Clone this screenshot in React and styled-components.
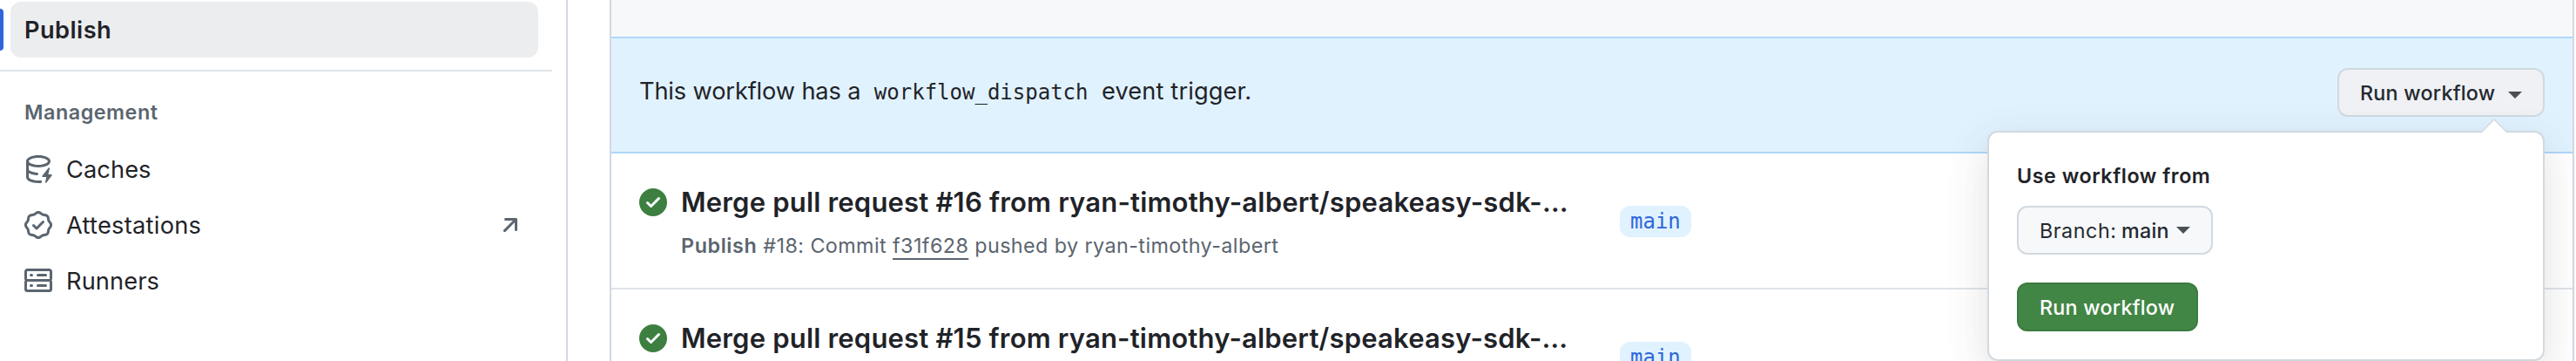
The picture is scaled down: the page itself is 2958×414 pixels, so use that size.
import React from "react";
import styled, { createGlobalStyle } from "styled-components";

const GlobalStyle = createGlobalStyle`
  *, *::before, *::after { box-sizing: border-box; }
  body {
    margin: 0;
    background: #fff;
    color: #1f2328;
    font-family: Inter, "Liberation Sans", sans-serif;
  }
`;

const Page = styled.div`
  display: flex;
  width: 2958px;
  height: 414px;
  overflow: hidden;
  background: #fff;
`;

/* Sidebar */

const Sidebar = styled.nav`
  flex: none;
  width: 652px;
  border-right: 2px solid #d1d9e0;
  padding-top: 2px;
`;

const NavList = styled.ul`
  list-style: none;
  margin: 0;
  padding: 0 32px 0 12px;
`;

const NavItem = styled.li`
  position: relative;
  display: flex;
  align-items: center;
  gap: 16px;
  height: 64px;
  padding: 0 16px;
  border-radius: 12px;
  font-size: 27.2px;
  font-weight: ${(p) => (p.$active ? 600 : 400)};
  letter-spacing: ${(p) => p.$tracking || 0}px;
  background: ${(p) => (p.$active ? "#ecedef" : "transparent")};
`;

const ActiveMark = styled.span`
  position: absolute;
  left: -16px;
  top: 8px;
  width: 8px;
  height: 48px;
  border-radius: 6px;
  background: #2f65da;
`;

const NavLabel = styled.span`
  flex: 1;
  white-space: nowrap;
`;

const Divider = styled.hr`
  width: 634px;
  height: 2px;
  margin: 14px 0 0;
  border: 0;
  background: #dfe4e8;
`;

const NavHeading = styled.h3`
  margin: 29px 28px 15px;
  font-size: 23.3px;
  line-height: 36px;
  font-weight: 600;
  letter-spacing: 0.54px;
  color: #5b656f;
`;

const Icon = styled.svg`
  flex: none;
  width: 32px;
  height: 32px;
  fill: ${(p) => p.$color || "#5b656f"};
`;

/* Workflow runs */

const Runs = styled.main`
  flex: none;
  width: 2256px;
  height: 440px;
  margin-left: 48px;
  border: 2px solid #d1d9e0;
  border-width: 0 2px;
`;

const RunsHeader = styled.div`
  height: 42px;
  background: #f6f8fa;
`;

const Banner = styled.section`
  display: flex;
  justify-content: space-between;
  align-items: flex-start;
  height: 134px;
  padding: 34px 32px 0;
  border: 2px solid #aed7fc;
  border-width: 2px 0;
  background: #e0f2fe;
`;

const BannerText = styled.p`
  display: flex;
  align-items: baseline;
  gap: 15.5px;
  margin: 0;
  font-size: 27.2px;
  line-height: 54px;
  white-space: nowrap;
`;

const Tracked = styled.span`
  letter-spacing: ${(p) => p.$by}px;
`;

const Code = styled.code`
  font-family: "DejaVu Sans Mono", "Liberation Mono", monospace;
  font-size: 24px;
  line-height: 1;
`;

const MenuAnchor = styled.div`
  position: relative;
`;

const Button = styled.button`
  display: flex;
  align-items: center;
  width: ${(p) => p.$width}px;
  height: 56px;
  padding: 0 24px;
  border: 2px solid ${(p) => (p.$primary ? "#3b7b40" : "#d1d9e0")};
  border-radius: 12px;
  background: ${(p) => (p.$primary ? "#428646" : p.$pressed ? "#eff1f5" : "#f6f8fa")};
  color: ${(p) => (p.$primary ? "#fff" : "#25292e")};
  font-family: inherit;
  font-size: 23.3px;
  font-weight: 500;
  letter-spacing: 0.24px;
  white-space: nowrap;
`;

const BranchLabel = styled.span`
  margin-right: 5.5px;
  font-weight: 400;
  letter-spacing: 0.55px;
`;

const Caret = styled.span`
  margin-left: auto;
  margin-top: ${(p) => p.$drop || 0}px;
  border: 8px solid transparent;
  border-top-color: #4b5056;
  border-bottom: 0;
`;

const Popover = styled.div`
  position: absolute;
  top: 72px;
  right: 0;
  width: 640px;
  height: 264px;
  padding: 32px;
  border: 2px solid #d1d9e0;
  border-radius: 12px;
  background: #fff;
  box-shadow: 0 16px 48px rgba(60, 62, 66, 0.16);
`;

const PopoverTip = styled.svg`
  position: absolute;
  top: -16px;
  right: 40px;
  width: 32px;
  height: 16px;
`;

const PopoverTitle = styled.h4`
  margin: 0 0 16px;
  font-size: 23.3px;
  line-height: 36px;
  font-weight: 600;
  letter-spacing: 0.54px;
`;

const Actions = styled.div`
  display: flex;
  flex-direction: column;
  gap: 32px;
`;

const Row = styled.article`
  display: flex;
  align-items: flex-start;
  height: 156px;
  padding: 32px 32px 0;
  border-bottom: 2px solid #dfe3e8;
`;

const StatusIcon = styled(Icon)`
  margin: 8px 16px 0 0;
`;

const RunBody = styled.div`
  width: 1078px;
  white-space: nowrap;
`;

const RunTitle = styled.h2`
  margin: 0;
  font-size: 31px;
  line-height: 48px;
  font-weight: 600;
  letter-spacing: 0.19px;
`;

const RunMeta = styled.p`
  margin: 8px 0 0;
  font-size: 23.3px;
  line-height: 36px;
  letter-spacing: 0.43px;
  color: #5b656f;
`;

const WorkflowName = styled.b`
  font-weight: 600;
  letter-spacing: 0.61px;
`;

const Commit = styled.a`
  text-decoration: underline;
  text-decoration-thickness: 2px;
  text-underline-offset: 6px;
  text-decoration-skip-ink: none;
`;

const BranchTag = styled.span`
  margin-top: 28px;
  padding: 0 12px;
  border-radius: 12px;
  background: #e0f2fe;
  color: #2f65da;
  font-family: "DejaVu Sans Mono", "Liberation Mono", monospace;
  font-size: 24px;
  line-height: 36px;
`;

const paths = {
  cache:
    "M2.5 5.724V8c0 .248.238.7 1.169 1.159.874.43 2.144.745 3.62.822a.75.75 0 1 1-.078 1.498c-1.622-.085-3.102-.432-4.204-.975a5.565 5.565 0 0 1-.507-.28V12.5c0 .133.058.318.282.551.227.237.591.483 1.101.707 1.015.447 2.47.742 4.117.742.406 0 .802-.018 1.183-.052a.751.751 0 1 1 .134 1.494C8.89 15.98 8.45 16 8 16c-1.805 0-3.475-.32-4.721-.869-.623-.274-1.173-.619-1.579-1.041-.408-.425-.7-.964-.7-1.59v-9c0-.626.292-1.165.7-1.591.406-.42.956-.766 1.579-1.04C4.525.32 6.195 0 8 0c1.806 0 3.476.32 4.721.869.623.274 1.173.619 1.579 1.041.408.425.7.964.7 1.59 0 .626-.292 1.165-.7 1.591-.406.42-.956.766-1.578 1.04C11.475 6.68 9.805 7 8 7c-1.805 0-3.475-.32-4.721-.869a6.15 6.15 0 0 1-.779-.407Zm0-2.224c0 .133.058.318.282.551.227.237.591.483 1.101.707C4.898 5.205 6.353 5.5 8 5.5c1.646 0 3.101-.295 4.118-.742.508-.224.873-.471 1.1-.708.224-.232.282-.417.282-.55 0-.133-.058-.318-.282-.551-.227-.237-.591-.483-1.101-.707C11.102 1.795 9.647 1.5 8 1.5c-1.646 0-3.101.295-4.118.742-.508.224-.873.471-1.1.708-.224.232-.282.417-.282.55Zm11.99 4.082a.375.375 0 0 0-.66-.313l-3.625 4.625a.375.375 0 0 0 .295.606h2.127l-.619 2.922a.375.375 0 0 0 .666.304l3.125-4.125A.375.375 0 0 0 15.5 11h-1.778l.769-3.418Z",
  verified:
    "m9.585.52.929.68c.153.112.331.186.518.215l1.138.175a2.678 2.678 0 0 1 2.24 2.24l.174 1.139c.029.187.103.365.215.518l.68.928a2.677 2.677 0 0 1 0 3.17l-.68.928a1.174 1.174 0 0 0-.215.518l-.175 1.138a2.678 2.678 0 0 1-2.241 2.241l-1.138.175a1.17 1.17 0 0 0-.518.215l-.928.68a2.677 2.677 0 0 1-3.17 0l-.928-.68a1.174 1.174 0 0 0-.518-.215L3.83 14.41a2.678 2.678 0 0 1-2.24-2.24l-.175-1.138a1.17 1.17 0 0 0-.215-.518l-.68-.928a2.677 2.677 0 0 1 0-3.17l.68-.928c.112-.153.186-.331.215-.518l.175-1.14a2.678 2.678 0 0 1 2.24-2.24l1.139-.175c.187-.029.365-.103.518-.215l.928-.68a2.677 2.677 0 0 1 3.17 0ZM7.303 1.728l-.927.68a2.67 2.67 0 0 1-1.18.489l-1.137.174a1.179 1.179 0 0 0-.987.987l-.174 1.136a2.677 2.677 0 0 1-.489 1.18l-.68.928a1.18 1.18 0 0 0 0 1.394l.68.927c.256.348.424.753.489 1.18l.174 1.137c.078.509.478.909.987.987l1.136.174a2.67 2.67 0 0 1 1.18.489l.928.68c.414.305.979.305 1.394 0l.927-.68a2.67 2.67 0 0 1 1.18-.489l1.137-.174a1.18 1.18 0 0 0 .987-.987l.174-1.136a2.67 2.67 0 0 1 .489-1.18l.68-.928a1.176 1.176 0 0 0 0-1.394l-.68-.927a2.686 2.686 0 0 1-.489-1.18l-.174-1.137a1.179 1.179 0 0 0-.987-.987l-1.136-.174a2.677 2.677 0 0 1-1.18-.489l-.928-.68a1.176 1.176 0 0 0-1.394 0ZM11.28 6.78l-3.75 3.75a.75.75 0 0 1-1.06 0L4.72 8.78a.751.751 0 0 1 .018-1.042.751.751 0 0 1 1.042-.018L7 8.94l3.22-3.22a.751.751 0 0 1 1.042.018.751.751 0 0 1 .018 1.042Z",
  server:
    "M1.75 1h12.5c.966 0 1.75.784 1.75 1.75v4c0 .372-.116.717-.314 1 .198.283.314.628.314 1v4a1.75 1.75 0 0 1-1.75 1.75H1.75A1.75 1.75 0 0 1 0 12.75v-4c0-.358.109-.707.314-1a1.739 1.739 0 0 1-.314-1v-4C0 1.784.784 1 1.75 1ZM1.5 2.75v4c0 .138.112.25.25.25h12.5a.25.25 0 0 0 .25-.25v-4a.25.25 0 0 0-.25-.25H1.75a.25.25 0 0 0-.25.25Zm.25 5.75a.25.25 0 0 0-.25.25v4c0 .138.112.25.25.25h12.5a.25.25 0 0 0 .25-.25v-4a.25.25 0 0 0-.25-.25ZM7 4.75A.75.75 0 0 1 7.75 4h4.5a.75.75 0 0 1 0 1.5h-4.5A.75.75 0 0 1 7 4.75ZM7.75 10h4.5a.75.75 0 0 1 0 1.5h-4.5a.75.75 0 0 1 0-1.5ZM3 4.75A.75.75 0 0 1 3.75 4h.5a.75.75 0 0 1 0 1.5h-.5A.75.75 0 0 1 3 4.75ZM3.75 10h.5a.75.75 0 0 1 0 1.5h-.5a.75.75 0 0 1 0-1.5Z",
  arrow:
    "M4.53 4.75A.75.75 0 0 1 5.28 4h6.01a.75.75 0 0 1 .75.75v6.01a.75.75 0 0 1-1.5 0v-4.2l-5.26 5.261a.749.749 0 0 1-1.275-.326.749.749 0 0 1 .215-.734L9.48 5.5h-4.2a.75.75 0 0 1-.75-.75Z",
  success:
    "M8 16A8 8 0 1 1 8 0a8 8 0 0 1 0 16Zm3.78-9.72a.751.751 0 0 0-.018-1.042.751.751 0 0 0-1.042-.018L6.75 9.19 5.28 7.72a.751.751 0 0 0-1.042.018.751.751 0 0 0-.018 1.042l2 2a.75.75 0 0 0 1.06 0Z",
};

const links = [
  { label: "Caches", icon: "cache", tracking: 0.1 },
  { label: "Attestations", icon: "verified", tracking: 0.29, external: true },
  { label: "Runners", icon: "server", tracking: 0.14 },
];

const runs = [
  { pr: 16, number: 18, commit: "f31f628" },
  { pr: 15 },
];

function Glyph({ name, as: Component = Icon, ...rest }) {
  return (
    <Component viewBox="0 0 16 16" aria-hidden="true" {...rest}>
      <path d={paths[name]} />
    </Component>
  );
}

function RunRow({ pr, number, commit }) {
  return (
    <Row>
      <Glyph name="success" as={StatusIcon} $color="#3d7f40" />
      <RunBody>
        <RunTitle>Merge pull request #{pr} from ryan-timothy-albert/speakeasy-sdk-…</RunTitle>
        {commit && (
          <RunMeta>
            <WorkflowName>Publish</WorkflowName> #{number}: Commit <Commit>{commit}</Commit> pushed by
            ryan-timothy-albert
          </RunMeta>
        )}
      </RunBody>
      <BranchTag>main</BranchTag>
    </Row>
  );
}

export default function App() {
  return (
    <>
      <GlobalStyle />
      <Page>
        <Sidebar>
          <NavList>
            <NavItem $active $tracking={0.45}>
              <ActiveMark />
              <NavLabel>Publish</NavLabel>
            </NavItem>
          </NavList>
          <Divider />
          <NavHeading>Management</NavHeading>
          <NavList>
            {links.map((link) => (
              <NavItem key={link.label} $tracking={link.tracking}>
                <Glyph name={link.icon} />
                <NavLabel>{link.label}</NavLabel>
                {link.external && <Glyph name="arrow" />}
              </NavItem>
            ))}
          </NavList>
        </Sidebar>
        <Runs>
          <RunsHeader />
          <Banner>
            <BannerText>
              <Tracked $by={-0.13}>This workflow has a</Tracked>
              <Code>workflow_dispatch</Code>
              <Tracked $by={0.14}>event trigger.</Tracked>
            </BannerText>
            <MenuAnchor>
              <Button $width={238} $pressed>
                Run workflow
                <Caret $drop={6} />
              </Button>
              <Popover>
                <PopoverTip viewBox="0 0 32 16">
                  <path d="M0 16 16 0l16 16Z" fill="#d1d9e0" />
                  <path d="M2 16 16 2l14 14Z" fill="#fff" />
                </PopoverTip>
                <PopoverTitle>Use workflow from</PopoverTitle>
                <Actions>
                  <Button $width={225}>
                    <BranchLabel>Branch:</BranchLabel>
                    main
                    <Caret />
                  </Button>
                  <Button $width={208} $primary>
                    Run workflow
                  </Button>
                </Actions>
              </Popover>
            </MenuAnchor>
          </Banner>
          {runs.map((run) => (
            <RunRow key={run.pr} {...run} />
          ))}
        </Runs>
      </Page>
    </>
  );
}
